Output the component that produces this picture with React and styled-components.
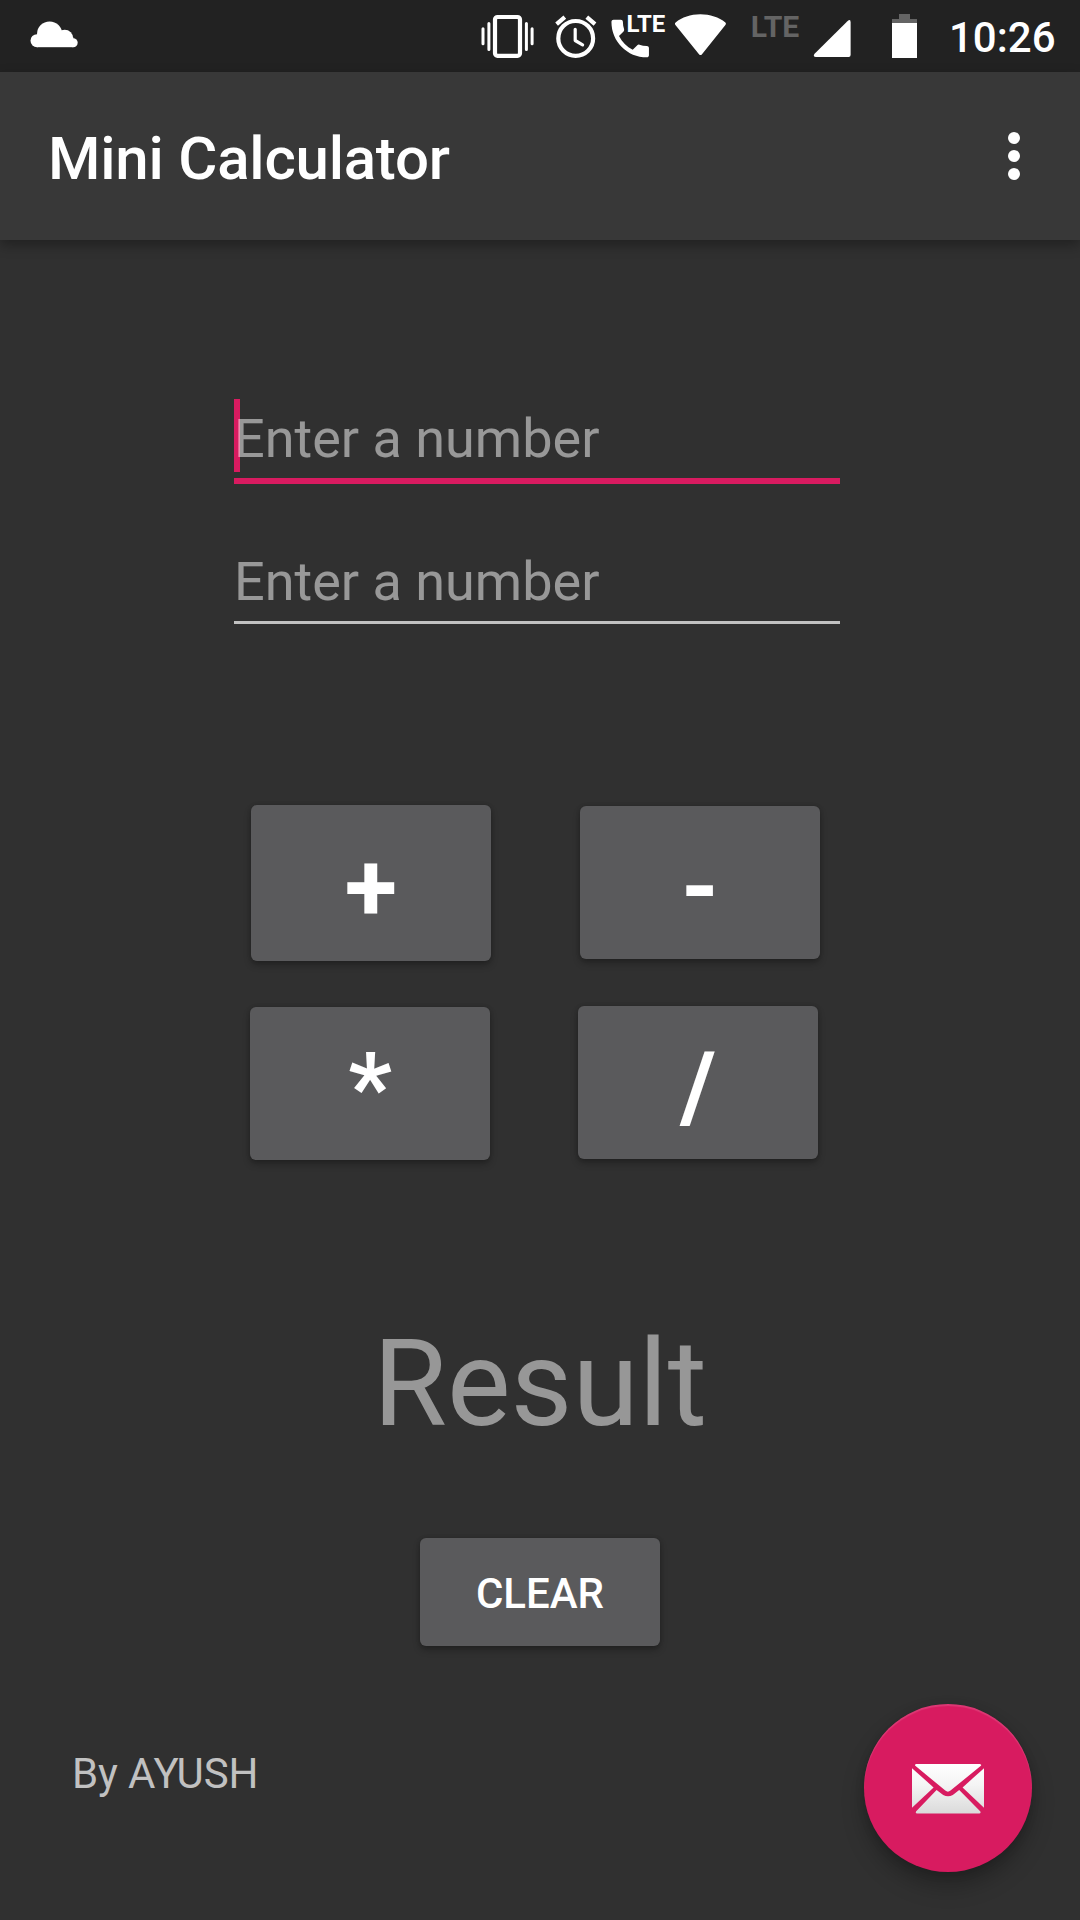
import React from "react";
import styled, { createGlobalStyle } from "styled-components";

const GlobalStyle = createGlobalStyle`
  * { box-sizing: border-box; }
  body { margin: 0; background: #303030; }
`;

const Screen = styled.div`
  width: 1080px;
  height: 1920px;
  display: flex;
  flex-direction: column;
  overflow: hidden;
  background: #303030;
  color: #fff;
  font-family: Roboto, "Liberation Sans", sans-serif;
`;

const StatusBar = styled.header`
  height: 72px;
  flex: none;
  display: flex;
  justify-content: space-between;
  padding: 0 25px 0 28px;
  background: #222222;
`;

const StatusGroup = styled.div`
  display: flex;
`;

const StatusSvg = styled.svg`
  display: block;
  flex: none;
  height: 72px;
  width: ${(p) => p.$width}px;
  fill: #fff;
  font-family: Roboto, sans-serif;
  font-weight: 700;
`;

const Clock = styled.time`
  width: 106px;
  margin-left: 29px;
  font-size: 42px;
  font-weight: 500;
  line-height: 75px;
  text-align: right;
  white-space: nowrap;
`;

const AppBar = styled.div`
  height: 168px;
  flex: none;
  display: flex;
  justify-content: space-between;
  align-items: flex-start;
  padding: 0 48px;
  background: #383838;
  box-shadow: 0 5px 12px rgba(0, 0, 0, 0.32);
`;

const Title = styled.h1`
  margin: 0;
  font-size: 60px;
  font-weight: 500;
  line-height: 173px;
  letter-spacing: -0.22px;
`;

const OverflowButton = styled.button`
  display: flex;
  flex-direction: column;
  align-items: center;
  gap: 6px;
  width: 36px;
  padding: 60px 0 0;
  border: 0;
  background: none;
`;

const Dot = styled.span`
  width: 12px;
  height: 12px;
  border-radius: 50%;
  background: #fff;
`;

const Content = styled.main`
  flex: 1;
  display: flex;
  flex-direction: column;
  padding-top: 159px;
`;

const Fields = styled.div`
  display: flex;
  flex-direction: column;
  gap: 58px;
  width: 606px;
  margin-left: 234px;
`;

const Field = styled.div`
  position: relative;
  font-size: 54px;
  line-height: 79px;
  border-bottom: ${(p) => (p.$focused ? "6px solid #d81b60" : "3px solid #c1c1c1")};
`;

const Caret = styled.span`
  position: absolute;
  left: 0;
  top: 0;
  width: 6px;
  height: 73px;
  background: #d81b60;
`;

const Hint = styled.span`
  position: relative;
  color: rgba(255, 255, 255, 0.5);
`;

const Keys = styled.div`
  display: flex;
  flex-direction: column;
  gap: 45px;
  margin-top: 181px;
`;

const KeyRow = styled.div`
  display: flex;
  align-items: flex-start;
  gap: ${(p) => p.$gap}px;
  height: ${(p) => p.$height}px;
  padding-left: ${(p) => p.$inset}px;
`;

const Key = styled.button`
  display: flex;
  justify-content: center;
  flex: none;
  width: 240px;
  height: ${(p) => p.$height}px;
  margin-top: ${(p) => p.$drop || 0}px;
  padding: 0;
  border: 0;
  border-radius: 6px;
  background: #5a5a5c;
  box-shadow: 0 4px 7px rgba(0, 0, 0, 0.28), 0 0 4px rgba(0, 0, 0, 0.14);
  color: #fff;
  font-family: inherit;
  font-size: ${(p) => p.$size || 96}px;
  font-weight: ${(p) => p.$weight || 700};
  line-height: ${(p) => p.$line}px;
`;

const Result = styled.div`
  margin-top: 118px;
  height: 212px;
  font-size: 120px;
  line-height: 212px;
  text-align: center;
  color: #979797;
`;

const ClearRow = styled.div`
  display: flex;
  justify-content: center;
  margin-top: 48px;
`;

const Footer = styled.footer`
  display: flex;
  justify-content: space-between;
  align-items: flex-start;
  margin-top: 58px;
  padding: 0 48px 0 72px;
`;

const Author = styled.span`
  font-size: 42px;
  line-height: 140px;
  letter-spacing: -0.12px;
  color: #c1c1c1;
`;

const Fab = styled.button`
  display: flex;
  align-items: center;
  justify-content: center;
  width: 168px;
  height: 168px;
  padding: 2px 0 0;
  border: 0;
  border-radius: 50%;
  background: #d81b60;
  box-shadow: 0 14px 22px rgba(0, 0, 0, 0.26), 0 2px 10px rgba(0, 0, 0, 0.14),
    inset 0 2px 1px rgba(255, 255, 255, 0.13);
`;

const CloudIcon = () => (
  <StatusSvg $width={54} viewBox="28 0 54 72">
    <circle cx="37" cy="40.7" r="6.5" />
    <circle cx="49.6" cy="34" r="12.6" />
    <circle cx="64.7" cy="38.3" r="8.5" />
    <circle cx="73.2" cy="42.7" r="4.5" />
    <rect x="37" y="37" width="36.2" height="10.2" />
  </StatusSvg>
);

const VibrateIcon = () => (
  <StatusSvg $width={70} viewBox="480 0 70 72">
    <rect x="495" y="17" width="25" height="38.8" rx="2.5" fill="none" stroke="#fff" strokeWidth="4.2" />
    <path
      d="M483 28.7v15M488.9 23.5v26M526.4 23.5v26M532.1 28.7v15"
      stroke="#fff"
      strokeWidth="3"
      strokeLinecap="round"
    />
  </StatusSvg>
);

const AlarmIcon = () => (
  <StatusSvg $width={58} viewBox="550 0 58 72">
    <g fill="none" stroke="#fff">
      <circle cx="575.7" cy="38.4" r="17.4" strokeWidth="4.2" />
      <path d="M575.2 29.3v11.2l7.4 4.4" strokeWidth="3.2" strokeLinecap="round" strokeLinejoin="round" />
      <path d="M556.6 24.1l8.2-7M586.8 17.1l8.2 7" strokeWidth="4.2" />
    </g>
  </StatusSvg>
);

const CallIcon = () => (
  <StatusSvg $width={64} viewBox="608 0 64 72">
    <path
      transform="translate(605.2 13.6) scale(2.083)"
      d="M6.62 10.79c1.44 2.83 3.76 5.14 6.59 6.59l2.2-2.2c.27-.27.67-.36 1.02-.24 1.12.37 2.33.57 3.57.57.55 0 1 .45 1 1V20c0 .55-.45 1-1 1-9.39 0-17-7.61-17-17 0-.55.45-1 1-1h3.5c.55 0 1 .45 1 1 0 1.25.2 2.45.57 3.57.11.35.03.74-.25 1.02l-2.2 2.2z"
    />
    <text x="626.6" y="32.2" fontSize="23" textLength="38.6" lengthAdjust="spacingAndGlyphs">LTE</text>
  </StatusSvg>
);

const WifiIcon = () => (
  <StatusSvg $width={76} viewBox="672 0 76 72">
    <path d="M675.6 22.4C682 17.3 690.6 14.3 700.3 14.3S719 17.3 725.4 22.4q1 1 .2 2.4L701.8 54.4q-1.3 1.3-2.6 0L675.2 24.8q-.8-1.4.4-2.4z" />
  </StatusSvg>
);

const MobileSignalIcon = () => (
  <StatusSvg $width={107} viewBox="748 0 107 72">
    <text x="750.8" y="37" fontSize="29.5" fill="#646464" textLength="48.5" lengthAdjust="spacingAndGlyphs">LTE</text>
    <path d="M847.4 21.2q3.2-2.6 3.2 1V55q0 2-2 2H816q-3.6-.3-1.4-3.2z" />
  </StatusSvg>
);

const BatteryIcon = () => (
  <StatusSvg $width={65} viewBox="855 0 65 72">
    <path fill="#646464" d="M899 14h11v5h7v4h-25v-4h7z" />
    <rect x="892" y="23" width="25" height="35" />
  </StatusSvg>
);

const MailIcon = () => (
  <svg width="72" height="50" viewBox="0 0 72 50">
    <defs>
      <linearGradient id="paper" x1="0" y1="0" x2="0" y2="50" gradientUnits="userSpaceOnUse">
        <stop offset="0" stopColor="#ffffff" />
        <stop offset="0.4" stopColor="#f5f5f5" />
        <stop offset="1" stopColor="#dadada" />
      </linearGradient>
    </defs>
    <g fill="url(#paper)">
      <path d="M4.2 0h63.6q2.4.6.8 2L38.5 26.6q-2.6 2.2-5.2 0L3.6 2q-1.6-1.4.6-2z" />
      <path d="M0 4.2L21.6 23.4 0 43.8z" />
      <path d="M72 4.2L50.6 23.4 72 43.8z" />
      <path d="M24.6 26l6.6 5q4.8 2.6 9.6 0l6.4-5L68.4 47.4q.8 1.8-1 2.2H5q-2-.4-1-2.2z" />
    </g>
  </svg>
);

export default function App() {
  return (
    <Screen>
      <GlobalStyle />
      <StatusBar>
        <StatusGroup>
          <CloudIcon />
        </StatusGroup>
        <StatusGroup>
          <VibrateIcon />
          <AlarmIcon />
          <CallIcon />
          <WifiIcon />
          <MobileSignalIcon />
          <BatteryIcon />
          <Clock>10:26</Clock>
        </StatusGroup>
      </StatusBar>
      <AppBar>
        <Title>Mini Calculator</Title>
        <OverflowButton aria-label="More options">
          <Dot />
          <Dot />
          <Dot />
        </OverflowButton>
      </AppBar>
      <Content>
        <Fields>
          <Field $focused>
            <Caret />
            <Hint>Enter a number</Hint>
          </Field>
          <Field>
            <Hint>Enter a number</Hint>
          </Field>
        </Fields>
        <Keys>
          <KeyRow $height={156} $inset={251} $gap={89}>
            <Key $height={156} $line={164}>+</Key>
            <Key $height={153} $line={163} $drop={1}>-</Key>
          </KeyRow>
          <KeyRow $height={154} $inset={250} $gap={88}>
            <Key $height={153} $line={163} $drop={1}>*</Key>
            <Key $height={153} $line={163}>/</Key>
          </KeyRow>
        </Keys>
        <Result>Result</Result>
        <ClearRow>
          <Key $height={108} $size={42} $weight={500} $line={111}>CLEAR</Key>
        </ClearRow>
        <Footer>
          <Author>By AYUSH</Author>
          <Fab aria-label="Send mail">
            <MailIcon />
          </Fab>
        </Footer>
      </Content>
    </Screen>
  );
}
